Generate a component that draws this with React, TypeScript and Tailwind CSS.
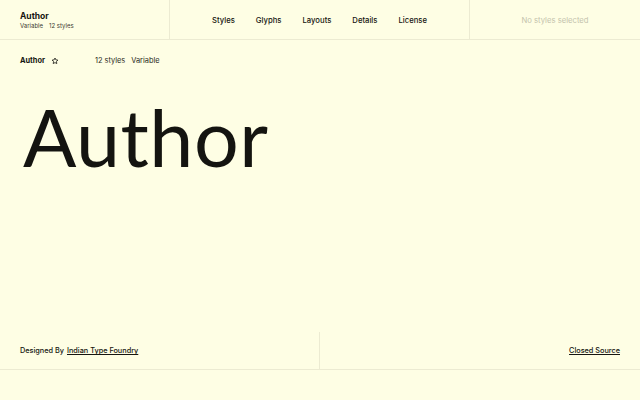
export default function App() {
  return (
    <div
      className="w-[640px] h-[400px] bg-[#fefee4] text-[#151510] flex flex-col overflow-hidden"
      style={{ fontFamily: 'Inter, "Liberation Sans", sans-serif' }}
    >
      {/* Header */}
      <header className="h-10 flex border-b border-[#ecebd2] flex-shrink-0">
        <div className="w-[170px] border-r border-[#ecebd2] pl-5 pt-px flex flex-col justify-center">
          <span className="text-[8.5px] font-bold leading-[11px]">Author</span>
          <div className="flex gap-[6px] text-[6px] leading-[8px] text-[#3a3a30]">
            <span>Variable</span>
            <span>12 styles</span>
          </div>
        </div>
        <nav className="w-[300px] border-r border-[#ecebd2] flex items-center justify-center gap-[21px] text-[7.7px] font-medium pt-[2px]">
          <span>Styles</span>
          <span>Glyphs</span>
          <span>Layouts</span>
          <span>Details</span>
          <span>License</span>
        </nav>
        <div className="flex-1 flex items-center justify-center text-[7.7px] text-[#c4c3ad] pt-[2px]">
          No styles selected
        </div>
      </header>

      {/* Font info row */}
      <div className="h-10 flex items-center pl-5 pt-[2px] text-[7.4px] flex-shrink-0">
        <div className="w-[75px] flex items-center gap-[6px]">
          <span className="font-bold">Author</span>
          <svg className="w-[8px] h-[8px]" viewBox="0 0 24 24" fill="none" stroke="currentColor" strokeWidth={2.4} strokeLinejoin="round">
            <path d="M12 3l2.7 5.6 6.1.8-4.5 4.2 1.1 6.1L12 16.8 6.6 19.7l1.1-6.1L3.2 9.4l6.1-.8z" />
          </svg>
        </div>
        <div className="flex gap-[6px] text-[#2a2a22]">
          <span>12 styles</span>
          <span>Variable</span>
        </div>
      </div>

      {/* Specimen */}
      <div className="flex-1 pl-[23px] pt-[7px]">
        <div
          className="text-[79px] leading-[100px] text-[#141410] tracking-[0.5px]"
          style={{ fontFamily: 'Lato, "Open Sans", sans-serif' }}
        >
          Author
        </div>
      </div>

      {/* Footer */}
      <footer className="h-[38px] flex border-b border-[#ecebd2] mb-[30px] flex-shrink-0 text-[7.3px] font-medium">
        <div className="w-[320px] border-r border-[#ecebd2] pl-5 flex items-center gap-[3px] pt-[2px]">
          <span>Designed By</span>
          <span className="underline underline-offset-1">Indian Type Foundry</span>
        </div>
        <div className="flex-1 flex items-center justify-end pr-5 pt-[2px]">
          <span className="underline underline-offset-1">Closed Source</span>
        </div>
      </footer>
    </div>
  )
}
